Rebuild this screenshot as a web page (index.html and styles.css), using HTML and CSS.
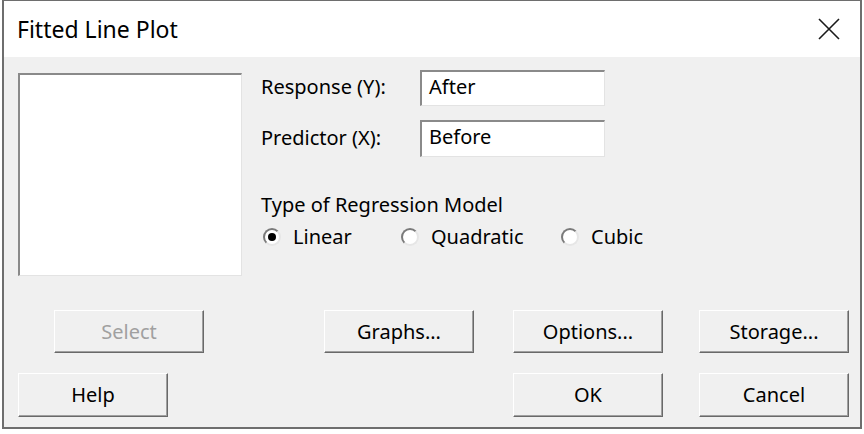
FILE: index.html
```html
<!DOCTYPE html>
<html>
<head>
<meta charset="utf-8">
<title>Fitted Line Plot</title>
<link rel="stylesheet" href="styles.css">
</head>
<body>
<div class="window">
  <div class="titlebar">
    <span class="title">Fitted Line Plot</span>
    <span class="close" aria-label="Close">
      <svg width="22" height="22" viewBox="0 0 22 22"><path d="M1 1 L21 21 M21 1 L1 21" stroke="#1a1a1a" stroke-width="1.6" fill="none"/></svg>
    </span>
  </div>
  <div class="content">
    <div class="top">
      <div class="listbox"></div>
      <div class="panel">
        <div class="field-row">
          <span class="label">Response (Y):</span>
          <div class="field">After</div>
        </div>
        <div class="field-row second">
          <span class="label">Predictor (X):</span>
          <div class="field tall">Before</div>
        </div>
        <div class="group-title">Type of Regression Model</div>
        <div class="radios">
          <label class="radio"><span class="dot checked"></span>Linear</label>
          <label class="radio"><span class="dot"></span>Quadratic</label>
          <label class="radio"><span class="dot"></span>Cubic</label>
        </div>
      </div>
    </div>
    <div class="btn-row row1">
      <button class="btn disabled b-select">Select</button>
      <button class="btn b-graphs">Graphs...</button>
      <button class="btn b-options">Options...</button>
      <button class="btn b-storage">Storage...</button>
    </div>
    <div class="btn-row row2">
      <button class="btn b-help">Help</button>
      <button class="btn b-ok">OK</button>
      <button class="btn b-cancel">Cancel</button>
    </div>
  </div>
</div>
</body>
</html>
```
FILE: styles.css
```css
* { box-sizing: border-box; }
html, body { margin: 0; padding: 0; background: #ffffff; }
body {
  font-family: "Noto Sans", "Open Sans", "Liberation Sans", sans-serif;
  font-size: 20px;
  color: #000;
}
.window {
  margin-left: 2px;
  width: 860px;
  height: 429px;
  border: 2px solid #6e6e6e;
  border-top-width: 1px;
  background: #f0f0f0;
  display: flex;
  flex-direction: column;
}
.titlebar {
  height: 56px;
  background: #ffffff;
  display: flex;
  align-items: center;
  padding-left: 13px;
  padding-right: 20px;
  justify-content: space-between;
}
.title { font-size: 23px; line-height: 30px; margin-top: 0; }
.close { display: flex; width: 22px; height: 22px; }
.content { flex: 1; padding-top: 13px; }
.top { display: flex; align-items: flex-start; }
.listbox {
  margin-left: 14px;
  margin-top: 3px;
  width: 224px;
  height: 203px;
  background: #fff;
  border-top: 2px solid #8a8a8a;
  border-left: 2px solid #8a8a8a;
  border-right: 1px solid #e3e3e3;
  border-bottom: 1px solid #e3e3e3;
}
.panel { margin-left: 19px; display: flex; flex-direction: column; }
.field-row { display: flex; align-items: center; }
.field-row.second { margin-top: 14px; }
.label { width: 159px; line-height: 24px; margin-top: -2px; }
.field {
  width: 185px;
  height: 36px;
  background: #fff;
  border-top: 2px solid #8a8a8a;
  border-left: 2px solid #8a8a8a;
  border-right: 1px solid #e3e3e3;
  border-bottom: 1px solid #e3e3e3;
  padding-left: 7px;
  line-height: 29px;
}
.field.tall { height: 37px; }
.group-title { margin-top: 36px; line-height: 24px; }
.radios {
  margin-top: 8px;
  padding-left: 2px;
  display: grid;
  grid-template-columns: 138px 160px auto;
  line-height: 24px;
}
.radio { display: flex; align-items: center; }
.dot {
  width: 18px;
  height: 18px;
  border-radius: 50%;
  background: #fff;
  border: 2px solid;
  border-color: #7a7a7a #e6e6e6 #e6e6e6 #7a7a7a;
  margin-right: 12px;
  display: flex;
  align-items: center;
  justify-content: center;
  flex: none;
}
.dot.checked::after {
  content: "";
  width: 8px;
  height: 8px;
  border-radius: 50%;
  background: #000;
}
.btn-row { display: flex; }
.row1 { margin-top: 34px; }
.row2 { margin-top: 20px; }
.btn {
  font-family: inherit;
  font-size: 20px;
  color: #000;
  width: 150px;
  height: 43px;
  background: #f0f0f0;
  border-top: 1px solid #ffffff;
  border-left: 1px solid #ffffff;
  border-right: 1px solid #696969;
  border-bottom: 1px solid #696969;
  box-shadow: inset -1px -1px 0 #a0a0a0;
  padding: 0;
  margin: 0;
  line-height: 24px;
}
.row2 .btn { height: 44px; }
.btn.disabled { color: #a0a0a0; }
.b-select { margin-left: 50px; }
.b-graphs { margin-left: 120px; }
.b-options { margin-left: 39px; }
.b-storage { margin-left: 36px; }
.b-help { margin-left: 14px; }
.b-ok { margin-left: 345px; }
.b-cancel { margin-left: 36px; }
```
